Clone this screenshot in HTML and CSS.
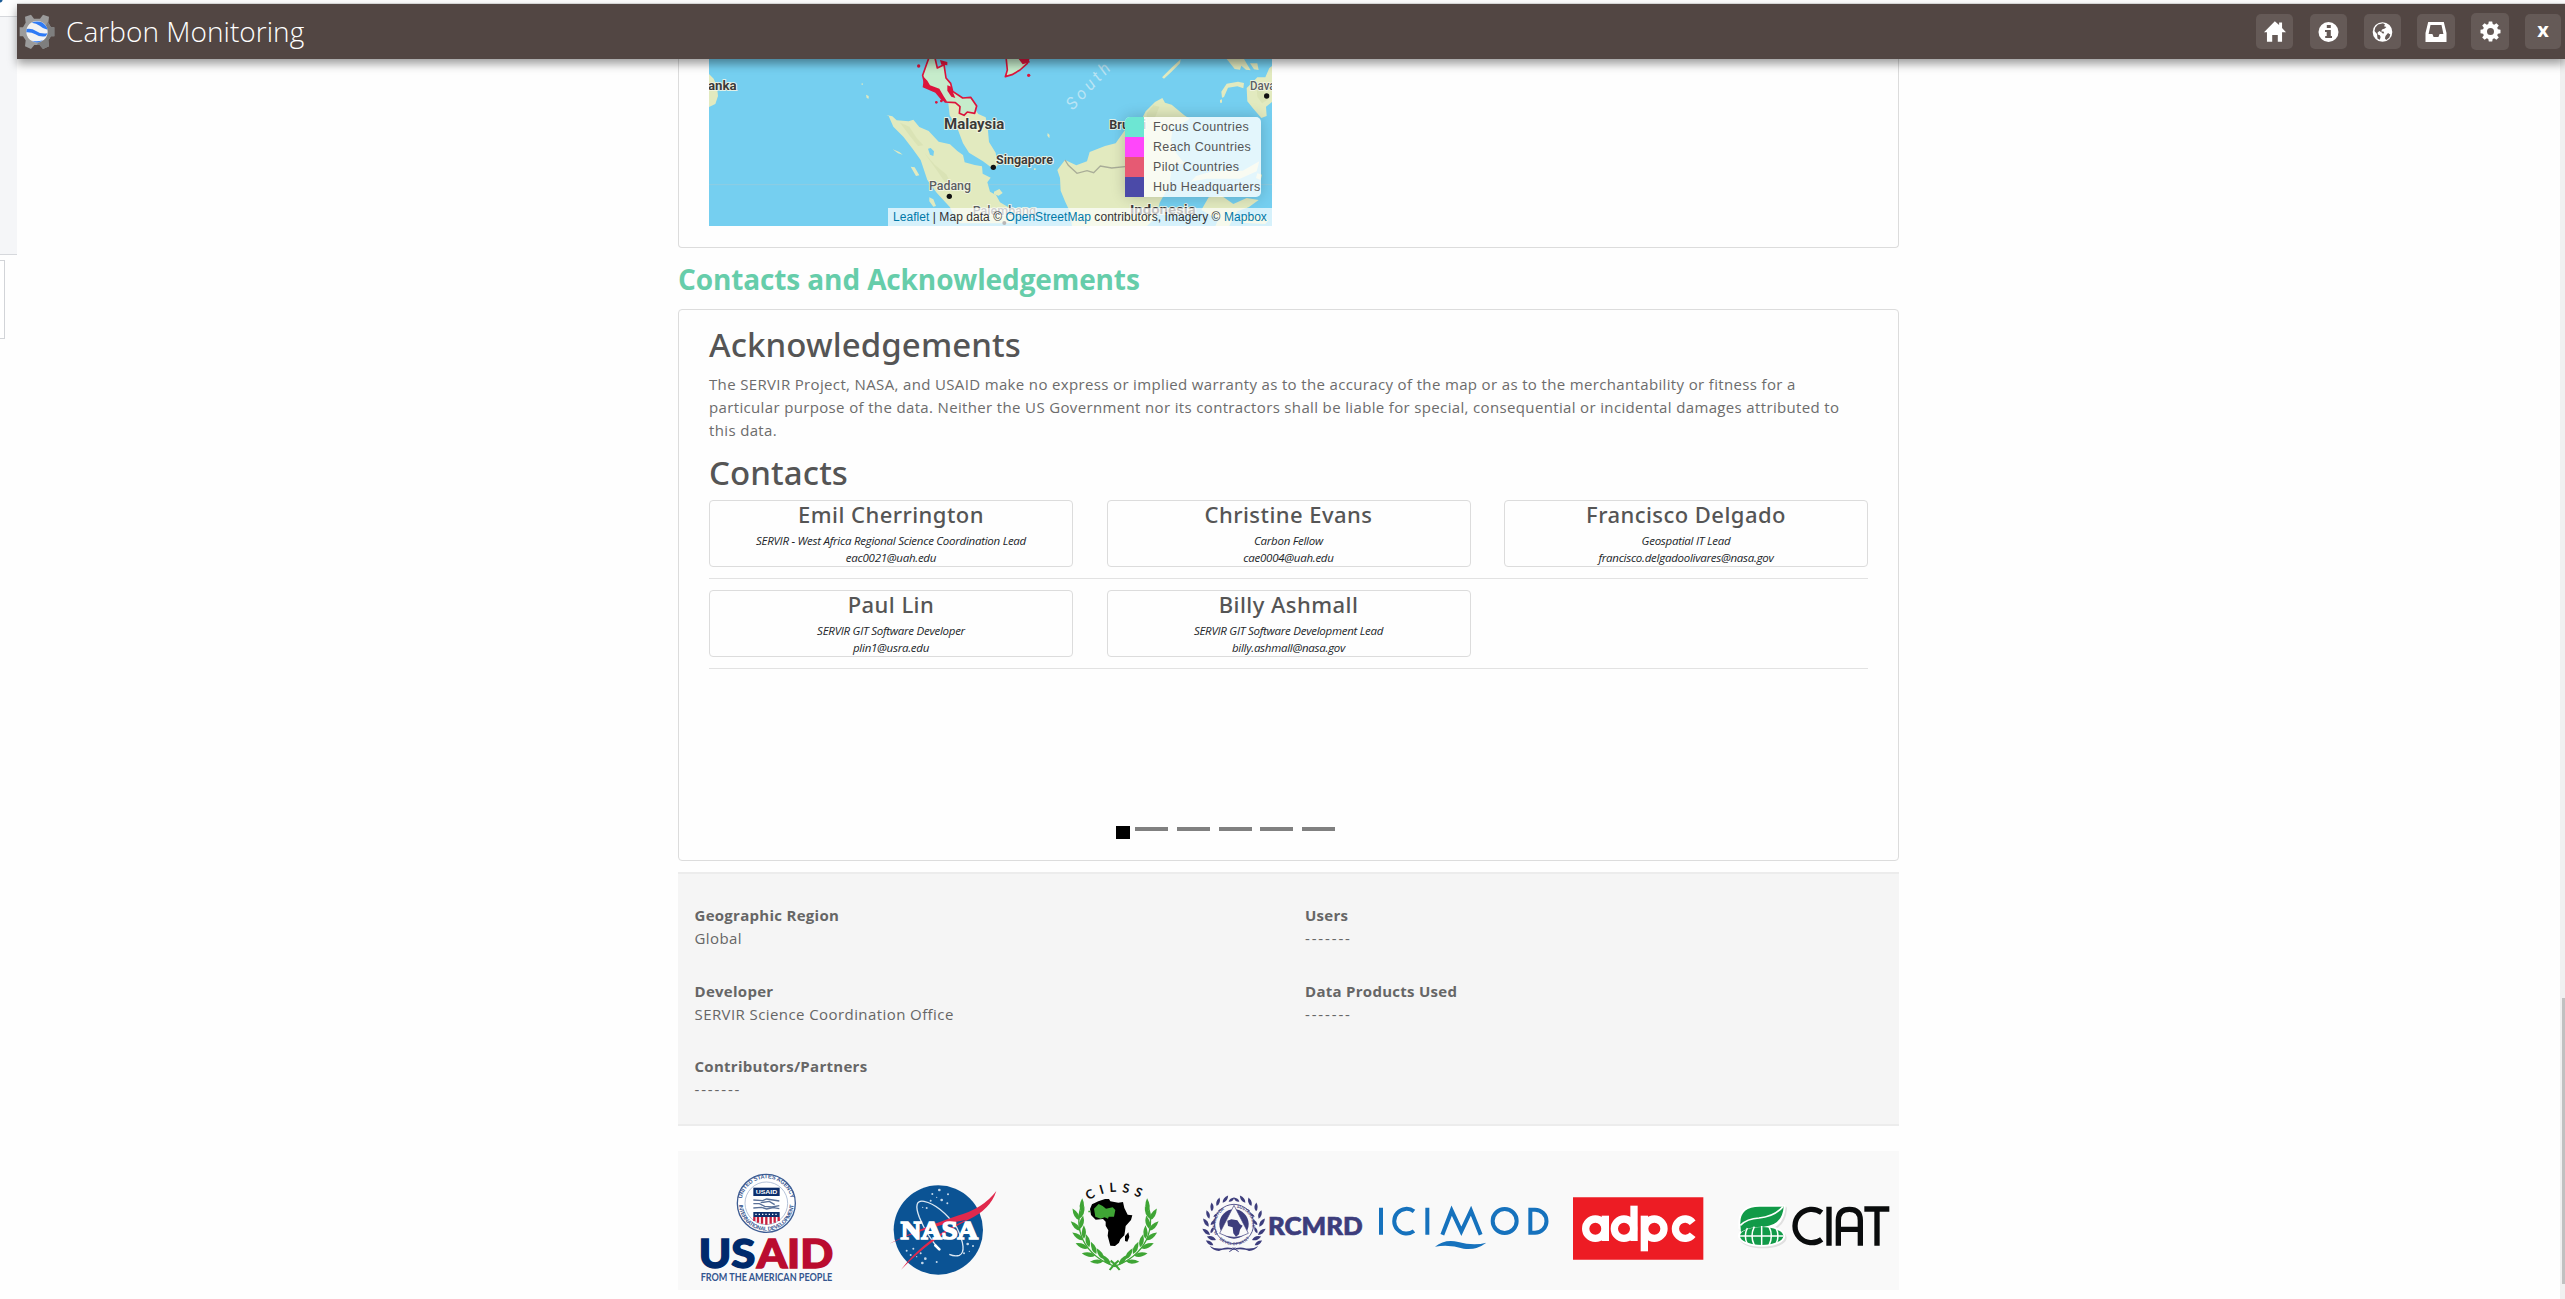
FILE: index.html
```html
<!DOCTYPE html>
<html lang="en">
<head>
<meta charset="utf-8">
<title>Carbon Monitoring</title>
<link rel="stylesheet" href="styles.css">
</head>
<body>
<aside class="edge">
  <div class="edge-top"></div>
  <div class="edge-panel"></div>
  <div class="edge-box"></div>
</aside>
<div class="frame">
  <header class="bar">
    <svg class="brand" viewBox="56 42 108 105">
      <g fill="#9b9b9b">
        <path d="M74 50l18-6 9 12h18l9-12 18 6-2 18 8 14h10v27h-10l-8 12 2 18-18 8-10-12h-16l-10 12-18-8 2-18-8-12H58V82h10l8-14z"/>
        <path fill="#7e7e7e" d="M142 66l10 16h10v27h-10l-8 12 2 18-18 8-10-12h-8z"/>
      </g>
      <circle cx="110" cy="95" r="32" fill="#f2f2f2"/>
      <path fill="#2f7bf5" d="M94 68q15-7 30-1 14 8 18 22-16-4-24-12-10-8-24-9zM79 87q16-2 28 6 14 10 34 7-2 6-5 9-18 3-31-6-12-7-27-6zM94 122q16 4 34-1-16 12-34 1z"/>
    </svg>
    <h1 class="title">Carbon Monitoring</h1>
    <nav class="tools">
      <a class="tool"><svg width="22" height="21" viewBox="88 63 67 63"><path fill="#fff" d="M121 63l13 12v-8h9v17l12 13h-12v29h-13v-21h-17v21H97V97h-9z"/></svg></a>
      <a class="tool"><svg width="21" height="20" viewBox="0 0 21 20"><circle cx="10.5" cy="10" r="10" fill="#fff"/><path fill="#655a57" d="M8.8 3h4v3h-4zM7 8h5.8v6H14v2H7.2v-2h1.5v-4H7z"/></svg></a>
      <a class="tool tool-globe"><svg width="21" height="20" viewBox="0 0 21 20"><circle cx="10.5" cy="10" r="9.8" fill="#fff"/><path fill="#655a57" d="M6 2.5l5-1.2 2 1.2-1 1.8 2.4.6-1.6 1.5-2.8 1-.8 2 2.3.2.7 1.6-1.4.3-1.4-1.2-2-1.2-1.8 1.4.2 2.1 2 .6.8 1.7-.8 2.8-2.3-1.3L5 12 2.5 9l.8-3.6zM16 11l2.3 1.6-1 3-3 2.3-1.4-1.5.6-2.4z"/></svg></a>
      <a class="tool tool-wide"><svg width="22" height="20" viewBox="0 0 22 20"><path fill="#fff" fill-rule="evenodd" d="M3.2 0h15.6L21.5 11v9H.5v-9zM5.5 3L3.6 12h3.8l1.2 3h4.8l1.2-3h3.8L16.5 3z"/></svg></a>
      <a class="tool tool-wide tool-tall"><svg width="21" height="21" viewBox="0 0 21 21"><path fill="#fff" fill-rule="evenodd" d="M8.8.5h3.4l.5 2.6 1.5.7 2.2-1.6 2.4 2.4-1.6 2.2.7 1.5 2.6.5v3.4l-2.6.5-.7 1.5 1.6 2.2-2.4 2.4-2.2-1.6-1.5.7-.5 2.6H8.800l-.5-2.600-1.500-.7-2.200 1.600L2.200 16.400l1.600-2.200-.7-1.500L.5 12.200V8.800l2.600-.5.7-1.500L2.200 4.600l2.400-2.400 2.200 1.600 1.500-.7zM10.500 7a3.500 3.500 0 100 7 3.500 3.500 0 000-7z"/></svg></a>
      <a class="tool tool-x">x</a>
    </nav>
  </header>
  <div class="body">
    <main class="column">
      <section class="card map-card">
        <svg class="map" viewBox="-573 27 1689 501">
          <rect x="-573" y="27" width="1689" height="501" fill="#75cff0"/>
          <path d="M-573 404H1116" stroke="#8fcde2" stroke-width="3"/>
          <g fill="#e2eabf">
            <path d="M-573 72l14 14 10 24 3 28-8 24-19 9z"/>
            <path d="M-41 195l18 4 13 12 36 3 14-5 18 22 28 12 30 32 34 8 22 20 17 12 5 22 30 8 22 4 2 22 24 12-10 14 8 28 18 10 12 22 24 14 24 8-8 20 2 21H172l-22-48-40-44-28-38-20-60-26-36-26-34-30-30-14-32z"/>
            <path d="M145 160l52-4 22 14 16 22 22 10 6 30 4 44 20 32 6 38-12 12-32-24-42-26-18-28-18-48-22-36z"/>
            <path d="M495 330l34 16 32-12 8-28 46-18 32-8 28-40 42-16 20-40 28-28 22-12 8 14 20 6 38 32 16 10-20 14-30 8-6 42 16 40 24 30-36 8-10 60-28 50-8 40-30 30H516l-6-42-14-30-14-34-2-38-8-24z"/>
            <path d="M1116 48l-8 6-12 28-24 0-22 22-10 10 2 40 18 22 24 28 16-6-2-28 18-14z"/>
            <path d="M966 143l-2-18 16-24 34-6 18 4-2 16-18-6-28 4-12 28zM786 82l30-30 26-24-2 12-26 26-22 20zM980 27h52l20 34-14-2-14-12-4 12-16-2zM1050 40l22 0 4 20-14-2z"/>
            <path d="M904 480l22-38 40-4 34 24 40-18 36 6-30 22-34 12-28 50h-40l12-30-24-8zM868 400l20-22 50-14 90-2 50-28-8 30-50 22-100 0-40 8zM1072 370l14 4-4 16-14-6zM1020 502l46-8 40 16-10 12-70-4z"/>
            <path d="M-22 298l20 8 10 8-14-4zM32 350l12 2 14 24-10 2zM88 442l12 6 8 20-8 2-12-16zM443 249l6 6-1 10-6-8zM210 352l14-4 8 10-12 6zM282 425l16-8 10 12-12 8-14-4zM355 478l24-6 10 16-20 4zM960 150l6-2 0 10-6 0zM-115 100l3 0 0 5-3 0zM-102 134l8 4 0 8-6-2zM402 355l5 0 0 5-5 0z"/>
          </g>
          <g fill="#d7dfb0" opacity=".7"><path d="M0 218l28 12 22 34 20 22-16 2-26-32zM74 310l30 34 36 30 20 44-20-14-30-44zM740 190l20-24 18 4-12 30-24 18zM690 290l40-40 20 20-30 60-20 10zM1070 110l20 10 12 30-16 10-14-20z"/></g>
          <path d="M84 296l8-2 10 10-2 14-10-4z" fill="#75cff0"/>
          <path d="M495 330l10 16 26 24 30-8 20 6 20-20 34 6 40-4" fill="none" stroke="#a9ad98" stroke-width="4"/>
          <g fill="#c6eccb" stroke="#dc143c" stroke-width="5" stroke-linejoin="round">
            <path d="M104 20l8 34 20-10 6 40 14 16 6 24 30 20 24-2 18 26-6 22-22-4-10 10-14-6 2-20-14-12-30-2-16-22-20-16-16-4-10-14-6-24 12-34 8-22z"/>
            <path d="M318 20l4 40-6 20 20-6 24-14 22-20 6-20z"/>
          </g>
          <g fill="#dc143c"><path d="M72 82l10 10 8 14 28 10 14 24 10 16-16-4-20-24-38-16zM142 106l12 4 6 20 6 14-12-4-12-18zM356 27l12 16 22-6-6-10zM120 30l22 6 0 10-18-2z"/><circle cx="56" cy="48" r="5"/><circle cx="386" cy="76" r="5"/><circle cx="109" cy="157" r="4"/><circle cx="124" cy="153" r="4"/></g>
          <g fill="#111"><circle cx="280" cy="352" r="8"/><circle cx="148" cy="439" r="8"/><circle cx="1100" cy="138" r="8"/><circle cx="313" cy="519" r="6"/></g>
          <g class="place">
            <text x="-576" y="121" font-size="40" textLength="86" lengthAdjust="spacingAndGlyphs">anka</text>
            <text x="132" y="237" font-size="42" textLength="181" lengthAdjust="spacingAndGlyphs">Malaysia</text>
            <text x="288" y="343" font-size="36" textLength="171" lengthAdjust="spacingAndGlyphs">Singapore</text>
            <text x="87" y="421" font-size="37" textLength="126" lengthAdjust="spacingAndGlyphs" class="soft">Padang</text>
            <text x="1050" y="119" font-size="37" textLength="96" lengthAdjust="spacingAndGlyphs" class="soft">Davao</text>
            <text x="628" y="236" font-size="38" textLength="110" lengthAdjust="spacingAndGlyphs">Brunei</text>
            <text x="690" y="492" font-size="40" textLength="197" lengthAdjust="spacingAndGlyphs">Indonesia</text>
            <text x="218" y="495" font-size="36" textLength="190" lengthAdjust="spacingAndGlyphs" class="soft">Palembang</text>
          </g>
          <text class="sea" transform="translate(518 182) rotate(-47)" font-size="50" textLength="170">South</text>
        </svg>
        <ul class="legend">
          <li><i class="focus"></i>Focus Countries</li>
          <li><i class="reach"></i>Reach Countries</li>
          <li><i class="pilot"></i>Pilot Countries</li>
          <li><i class="hub"></i>Hub Headquarters</li>
        </ul>
        <div class="credit"><a>Leaflet</a> | Map data © <a>OpenStreetMap</a> contributors, Imagery © <a>Mapbox</a></div>
      </section>

      <h2 class="section-title">Contacts and Acknowledgements</h2>

      <section class="card contacts">
        <h3 class="heading">Acknowledgements</h3>
        <p class="notice">The SERVIR Project, NASA, and USAID make no express or implied warranty as to the accuracy of the map or as to the merchantability or fitness for a<br>particular purpose of the data. Neither the US Government nor its contractors shall be liable for special, consequential or incidental damages attributed to<br>this data.</p>
        <h3 class="heading heading-contacts">Contacts</h3>
        <div class="people">
          <div class="person"><h4>Emil Cherrington</h4><p>SERVIR - West Africa Regional Science Coordination Lead</p><p>eac0021@uah.edu</p></div>
          <div class="person"><h4>Christine Evans</h4><p>Carbon Fellow</p><p>cae0004@uah.edu</p></div>
          <div class="person"><h4>Francisco Delgado</h4><p>Geospatial IT Lead</p><p>francisco.delgadoolivares@nasa.gov</p></div>
        </div>
        <div class="people">
          <div class="person"><h4>Paul Lin</h4><p>SERVIR GIT Software Developer</p><p>plin1@usra.edu</p></div>
          <div class="person"><h4>Billy Ashmall</h4><p>SERVIR GIT Software Development Lead</p><p>billy.ashmall@nasa.gov</p></div>
        </div>
        <div class="indicators"><b></b><i></i><i></i><i></i><i></i><i></i></div>
      </section>

      <section class="facts">
        <dl><dt>Geographic Region</dt><dd>Global</dd></dl>
        <dl><dt>Users</dt><dd class="none">-------</dd></dl>
        <dl><dt>Developer</dt><dd>SERVIR Science Coordination Office</dd></dl>
        <dl><dt>Data Products Used</dt><dd class="none">-------</dd></dl>
        <dl><dt>Contributors/Partners</dt><dd class="none">-------</dd></dl>
      </section>

      <footer class="logos">
        <svg width="182" height="139" viewBox="24 33 546 417">
          <defs><path id="seal-top" d="M214 190a75 75 0 01150 0"/><path id="seal-bottom" d="M207 190a82 82 0 00164 0"/></defs>
          <circle cx="289" cy="190" r="87" fill="#fff" stroke="#3d5c93" stroke-width="4"/>
          <circle cx="289" cy="190" r="64" fill="none" stroke="#8fa3c4" stroke-width="2"/>
          <g font-family="Liberation Sans, sans-serif" font-weight="700" fill="#3d5c93" font-size="17">
            <text><textPath href="#seal-top" startOffset="14" textLength="206">UNITED STATES AGENCY</textPath></text>
            <text><textPath href="#seal-bottom" startOffset="5" textLength="248">INTERNATIONAL DEVELOPMENT</textPath></text>
          </g>
          <path d="M250 143h79v25h-79z" fill="#0d2f6c"/>
          <text x="257" y="162" font-family="Liberation Sans, sans-serif" font-weight="700" font-size="18" fill="#fff" textLength="65" lengthAdjust="spacingAndGlyphs">USAID</text>
          <path d="M250 180l28 2 12-5 38 6M250 191l18 0 16 8 22 2 22-4M250 204l24-2 16 5 20-4 18 3M272 188l26-4 16 10" fill="none" stroke="#5a7198" stroke-width="4"/>
          <path d="M250 216h79v15h-79z" fill="#0d2f6c"/>
          <path d="M256 223h68" stroke="#fff" stroke-width="4" stroke-dasharray="4 6"/>
          <path d="M253 231v12M264 231v17M276 231v20M289 231v23M302 231v20M314 231v17M326 231v12" stroke="#c8203f" stroke-width="7"/>
          <g font-family="Lato, sans-serif" font-weight="900" font-size="118" stroke-width="4">
            <text x="86" y="383" fill="#002a6c" stroke="#002a6c" textLength="170" lengthAdjust="spacingAndGlyphs">US</text>
            <text x="260" y="383" fill="#ba0c2f" stroke="#ba0c2f" textLength="230" lengthAdjust="spacingAndGlyphs">AID</text>
          </g>
          <text x="92" y="422" font-family="Lato, sans-serif" font-weight="700" font-size="31" fill="#33558f" textLength="395" lengthAdjust="spacingAndGlyphs">FROM THE AMERICAN PEOPLE</text>
        </svg>
        <svg width="174" height="139" viewBox="570 33 522 417">
          <circle cx="805" cy="270" r="134" fill="#0b5394"/>
          <g fill="#c6d8ea"><circle cx="808" cy="150" r="4"/><circle cx="834" cy="163" r="3"/><circle cx="787" cy="162" r="3"/><circle cx="782" cy="182" r="3"/><circle cx="815" cy="180" r="4"/><circle cx="832" cy="190" r="3"/><circle cx="800" cy="172" r="2"/><circle cx="770" cy="204" r="3"/><circle cx="758" cy="202" r="2"/><circle cx="710" cy="332" r="3"/><circle cx="730" cy="326" r="3"/><circle cx="752" cy="340" r="3"/><circle cx="766" cy="356" r="4"/><circle cx="757" cy="369" r="4"/><circle cx="740" cy="350" r="2"/><circle cx="722" cy="345" r="3"/><circle cx="800" cy="366" r="3"/><circle cx="893" cy="312" r="4"/><circle cx="909" cy="318" r="3"/><circle cx="882" cy="340" r="3"/><circle cx="898" cy="334" r="2"/></g>
          <path d="M806 326q-36-40-58-94-20-54 14-48 48 10 98 78 34 72 8 84-14 4-30-3" fill="none" stroke="#dce8f3" stroke-width="4"/>
          <path d="M658 311q76-40 204-84 76-20 117-74-18 56-84 86-112 56-202 150 70-94 196-150-120 20-231 72z" fill="#e0294d"/>
          <text x="692" y="297" font-family="Liberation Serif, serif" font-weight="700" font-size="74" fill="#fff" stroke="#fff" stroke-width="5" textLength="232" lengthAdjust="spacingAndGlyphs">NASA</text>
          <path d="M796 316l12 12" stroke="#fff" stroke-width="8" stroke-linecap="round"/>
        </svg>
        <svg width="156" height="139" viewBox="1092 33 468 417">
          <defs>
            <path id="cilss-name" d="M1256 181q74-48 156-6"/>
            <path id="lf" d="M0 0q-15-12-4-40q15 22 4 40z"/>
            <g id="sprig">
              <path d="M1337 380q-70-24-98-80-24-54-2-112" fill="none" stroke="#3fa535" stroke-width="4"/>
              <g fill="#3fa535">
                <use href="#lf" transform="translate(1235 215) rotate(8)"/>
                <use href="#lf" transform="translate(1228 240) rotate(-25)"/><use href="#lf" transform="translate(1228 236) rotate(28)"/>
                <use href="#lf" transform="translate(1231 272) rotate(-40)"/><use href="#lf" transform="translate(1231 266) rotate(18)"/>
                <use href="#lf" transform="translate(1240 300) rotate(-50)"/><use href="#lf" transform="translate(1242 296) rotate(5)"/>
                <use href="#lf" transform="translate(1254 325) rotate(-62)"/><use href="#lf" transform="translate(1258 322) rotate(-8)"/>
                <use href="#lf" transform="translate(1275 347) rotate(-74)"/><use href="#lf" transform="translate(1279 342) rotate(-18)"/>
                <use href="#lf" transform="translate(1300 364) rotate(-86)"/><use href="#lf" transform="translate(1302 358) rotate(-28)"/>
                <use href="#lf" transform="translate(1322 374) rotate(-36)"/>
              </g>
              <path d="M1322 362q14 10 27 28" fill="none" stroke="#3fa535" stroke-width="6"/>
            </g>
          </defs>
          <use href="#sprig"/><use href="#sprig" transform="translate(2668 0) scale(-1 1)"/>
          <text font-family="Lato, sans-serif" font-weight="700" font-size="38" fill="#111"><textPath href="#cilss-name" textLength="162">CILSS</textPath></text>
          <path d="M1285 184l20-7 12 0 4 7 24 4 14-2 4 18 10 20 14 2-4 14-16 18-2 16-2 12-12 12-4 10-12 10-14-1-8-30 2-16-8-14 0-12-8-8-22 2-14-14-3-18 6-14zM1375 277l3 14-6 14-7-2 0-14z" fill="#000"/>
          <path d="M1272 206l14-14 12 6 10 8 20-4 8 8-4 20-16 0-2 6-10-4-12 4-16-6zM1255 212l7 0 0 5-7 0z" fill="#3fa535"/>
        </svg>
        <svg width="180" height="139" viewBox="0 -57 540 417">
          <defs>
            <path id="rc-leaf" d="M0 0q-13-6-12-24q16 8 12 24z"/>
            <g id="rc-side" fill="#3d3d7c">
              <use href="#rc-leaf" transform="translate(70 226) rotate(-30)"/><use href="#rc-leaf" transform="translate(78 210) rotate(-42) scale(1.1)"/>
              <use href="#rc-leaf" transform="translate(60 195) rotate(-24) scale(1.1)"/><use href="#rc-leaf" transform="translate(56 170) rotate(-8) scale(1.1)"/>
              <use href="#rc-leaf" transform="translate(58 146) rotate(8)"/><use href="#rc-leaf" transform="translate(66 124) rotate(24)"/>
              <use href="#rc-leaf" transform="translate(80 108) rotate(45)"/><use href="#rc-leaf" transform="translate(98 98) rotate(64)"/><use href="#rc-leaf" transform="translate(116 95) rotate(80) scale(.8)"/>
              <use href="#rc-leaf" transform="translate(62 190) rotate(50) scale(.8)"/><use href="#rc-leaf" transform="translate(62 165) rotate(65) scale(.8)"/><use href="#rc-leaf" transform="translate(70 140) rotate(85) scale(.8)"/><use href="#rc-leaf" transform="translate(84 122) rotate(105) scale(.8)"/>
              <path d="M59 228q20 12 46 5 20-2 30 6-34-4-48 4-18-2-28-15z"/>
              <path d="M118 245l18-12" stroke="#3d3d7c" stroke-width="3"/>
            </g>
            <path id="rc-left" d="M93 203a52 52 0 0136-90"/><path id="rc-right" d="M136 113a52 52 0 0134 90"/><path id="rc-low" d="M92 197a52 52 0 0080 0"/>
          </defs>
          <use href="#rc-side"/><use href="#rc-side" transform="translate(264 0) scale(-1 1)"/>
          <circle cx="132" cy="162" r="59" fill="#f9f9f9" stroke="#3d3d7c" stroke-width="2.500"/>
          <circle cx="132" cy="162" r="44" fill="#3d3d7c"/>
          <path d="M132 106l43 84q-43 24-86 0z" fill="#f9f9f9" stroke="#3d3d7c" stroke-width="2"/>
          <path d="M112 152l12-4 18 3 8 12 8 4-8 12-3 14-9 7-8-10-2-18-14-4z" fill="#3d3d7c"/>
          <g font-family="Liberation Sans, sans-serif" font-weight="700" font-size="12" fill="#3d3d7c">
            <text><textPath href="#rc-left" startOffset="14" textLength="84">PLANNING FOR</textPath></text><text><textPath href="#rc-right" startOffset="4" textLength="84">SUSTAINABLE</textPath></text><text dy="10"><textPath href="#rc-low" startOffset="4" textLength="86">DEVELOPMENT</textPath></text>
          </g>
          <text x="234" y="194" font-family="Lato, sans-serif" font-weight="900" font-size="73" fill="#3d3d7c" stroke="#3d3d7c" stroke-width="2" textLength="284" lengthAdjust="spacingAndGlyphs">RCMRD</text>
        </svg>
        <svg width="190" height="139" viewBox="540 -57 570 417">
          <g fill="none" stroke="#1672bd" stroke-width="12">
            <path d="M573 113v81M712 113v81M757 194l28-72 29 62 29-62 29 72M672 124a37 37 0 100 59M1021 119v69h14a34.500 34.500 0 000-69z"/>
            <circle cx="944" cy="153" r="36"/>
          </g>
          <path d="M735 230q30-24 70-14 46 12 84 2-32 24-68 18-44-14-86-6z" fill="#1672bd"/>
        </svg>
        <svg width="160" height="139" viewBox="0 -57 480 417">
          <path d="M39 82h391v187H39z" fill="#ed1c24"/>
          <g fill="none" stroke="#fff" stroke-width="22">
            <circle cx="106" cy="176" r="29"/><path d="M136 137v76"/>
            <circle cx="192" cy="176" r="29"/><path d="M222 107v106"/>
            <circle cx="283" cy="176" r="29"/><path d="M253 137v107"/>
            <path d="M398 158a29 29 0 100 36"/>
          </g>
        </svg>
        <svg width="179" height="139" viewBox="480 -57 537 417">
          <g stroke="#e0e0e0" stroke-width="12" stroke-linejoin="round" fill="#e0e0e0" transform="translate(4 5)"><path d="M541 164q-2-54 58-54h72q-4 58-56 64H541z"/><ellipse cx="605" cy="198" rx="65" ry="26"/></g>
          <g stroke="#fff" stroke-width="12" stroke-linejoin="round" fill="#fff"><path d="M541 164q-2-54 58-54h72q-4 58-56 64H541z"/><ellipse cx="605" cy="198" rx="65" ry="26"/></g>
          <path d="M541 162q-2-52 58-52h72q-4 56-60 60-46 0-68 16z" fill="#119a48"/>
          <path d="M541 166q20-20 56-22 46-4 72-34" fill="none" stroke="#fff" stroke-width="5"/>
          <ellipse cx="605" cy="198" rx="65" ry="27" fill="#119a48"/>
          <path d="M605 168v60M540 198h130M583 170q-14 28 0 56M627 170q14 28 0 56M562 174q-12 24 0 48M648 174q12 24 0 48" stroke="#fff" stroke-width="4.500" fill="none"/>
          <g fill="none" stroke="#0a0c0d" stroke-width="16">
            <path d="M785 128a50 50 0 100 80M807 110v117M835 227v-76q0-33 33-33t33 33v76M835 178h66M913 117h75M951 117v110"/>
          </g>
        </svg>
      </footer>
    </main>
    <div class="track"><div class="thumb"></div></div>
  </div>
</div>
</body>
</html>
```
FILE: styles.css
```css
* { box-sizing: border-box; }
body {
  margin: 0;
  height: 1299px;
  display: flex;
  overflow: hidden;
  background: #fefefe;
  font-family: "Open Sans", "Noto Sans", sans-serif;
}
h1, h2, h3, h4, p, ul, dl, dd { margin: 0; padding: 0; }

.edge { width: 17px; flex: none; }
.edge-top {
  height: 17px;
  border-bottom: 1px solid #d6d8dc;
  background: radial-gradient(circle at 0 0, #1c5c97 2px, transparent 3px);
}
.edge-panel { height: 238px; background: #f5f6f8; border-bottom: 1px solid #d6d8dc; }
.edge-box {
  width: 5px;
  height: 79px;
  margin-top: 5px;
  border: 1px solid #d2d4d8;
  border-left: 0;
  background: #fff;
}

.frame { flex: 1; padding-top: 3px; display: flex; flex-direction: column; }
.bar {
  position: relative;
  z-index: 2;
  height: 56px;
  flex: none;
  display: flex;
  align-items: center;
  padding: 0 4px 0 2px;
  background: #524643;
  border-top: 1px solid #d4d4d4;
  box-shadow: 0 5px 9px rgba(0, 0, 0, .38);
}
.brand { width: 36px; height: 35px; }
.title {
  flex: 1;
  margin: -2px 0 0 11px;
  font-size: 28px;
  line-height: 40px;
  font-weight: 300;
  letter-spacing: .04px;
  color: #fff;
}
.tools { display: flex; align-items: center; gap: 17px; }
.tool {
  width: 37px;
  height: 35px;
  display: flex;
  align-items: center;
  justify-content: center;
  border-radius: 5px;
  background: #655a57;
}
.tool-globe { margin-right: -1px; }
.tool-wide { width: 38px; margin-right: -1px; }
.tool-tall { height: 37px; }
.tool-x {
  width: 36px;
  padding-bottom: 3px;
  color: #fff;
  font: 700 20px/30px "Open Sans", sans-serif;
}

.body { flex: 1; display: flex; justify-content: center; }
.column { width: 1221px; margin: 0 auto; }
.card { border: 1px solid #dcdcdc; border-radius: 4px; padding: 0 30px; background: #fefefe; }

.map-card { position: relative; height: 189px; border-top: 0; border-radius: 0 0 4px 4px; }
.map { display: block; width: 563px; height: 167px; }
.place { font-family: Roboto, sans-serif; font-weight: 700; fill: #3a3a3a; stroke: #f4f7e6; stroke-width: 5px; paint-order: stroke; }
.place .soft { font-weight: 500; fill: #5c5f62; }
.sea { font-family: Roboto, sans-serif; font-style: italic; fill: #b9e4f4; }
.legend {
  position: absolute;
  left: 446px;
  top: 58px;
  width: 136px;
  height: 80px;
  list-style: none;
  border-radius: 5px;
  background: rgba(255, 255, 255, .8);
  box-shadow: 0 0 15px rgba(0, 0, 0, .2);
  font: 12.5px/20px "Liberation Sans", Arial, sans-serif;
  letter-spacing: .34px;
  white-space: nowrap;
  color: #555;
}
.legend li { display: flex; height: 20px; line-height: 20px; }
.legend i { width: 19px; height: 20px; margin-right: 9px; }
.focus { background: #6de6d3; border-radius: 5px 0 0 0; }
.reach { background: #ff47fa; }
.pilot { background: #e65a73; }
.hub { background: #4b4aa8; }
.credit {
  position: absolute;
  left: 209px;
  top: 149px;
  width: 385px;
  height: 18px;
  padding-left: 5px;
  background: rgba(255, 255, 255, .7);
  font: 12px/18px "Liberation Sans", Arial, sans-serif;
  letter-spacing: .055px;
  white-space: nowrap;
  color: #333;
}
.credit a { color: #0078a8; }

.section-title {
  height: 61px;
  font-size: 28px;
  line-height: 63px;
  font-weight: 700;
  letter-spacing: -.12px;
  color: #66cdaa;
}
.contacts { height: 552px; padding-top: 9px; }
.heading {
  font: 500 33px/52px "Noto Sans", sans-serif;
  letter-spacing: .1px;
  color: #555;
}
.notice {
  margin-top: 2px;
  font-size: 15px;
  line-height: 23px;
  letter-spacing: .35px;
  white-space: nowrap;
  color: #6c6c6c;
}
.heading-contacts { margin: 6px 0 2px; line-height: 50px; }
.people {
  display: grid;
  grid-template-columns: repeat(3, 364px);
  justify-content: space-between;
  margin-bottom: 11px;
  padding-bottom: 11px;
  border-bottom: 1px solid #e2e2e2;
}
.person { height: 67px; border: 1px solid #dcdcdc; border-radius: 4px; text-align: center; color: #212529; }
.person h4 {
  margin-bottom: 4px;
  font: 500 22px/27px "Noto Sans", sans-serif;
  letter-spacing: .45px;
  color: #555;
}
.person p { font-size: 11.5px; line-height: 17px; font-style: italic; letter-spacing: -.26px; }
.indicators { display: flex; align-items: flex-start; margin: 157px 0 0 407px; }
.indicators b { width: 14px; height: 13px; margin-right: 5px; background: #000; }
.indicators i { width: 33px; height: 4px; margin: 1px 8.75px 0 0; background: #808080; }

.facts {
  height: 254px;
  margin-top: 11px;
  padding: 29px 16.5px 0;
  display: grid;
  grid-template-columns: 610.5px 1fr;
  grid-auto-rows: 75.5px;
  background: #f5f5f5;
  border: solid #ececec;
  border-width: 2px 0;
  color: #666;
  font-size: 15px;
}
.facts dt { font-weight: 700; line-height: 24px; letter-spacing: .28px; }
.facts dd { line-height: 23.4px; letter-spacing: .42px; }
.facts .none { letter-spacing: 1.85px; }

.logos { display: flex; height: 139px; margin-top: 25px; background: #f9f9f9; }
.logos svg { display: block; flex: none; }

.track { width: 5px; flex: none; padding: 939px 0 0 2px; background: #f0f0f0; }
.thumb { height: 286px; background: #c1c1c1; }
```
